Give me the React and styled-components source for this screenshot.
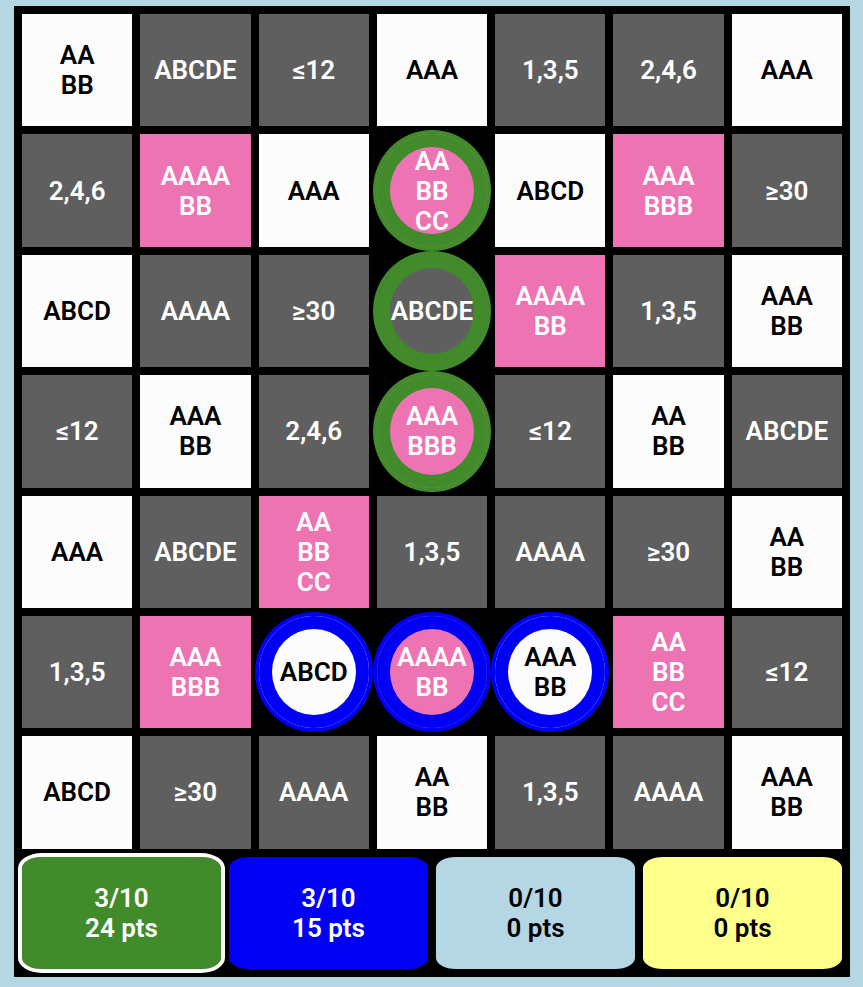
import React, { useState } from "react";
import styled, { createGlobalStyle, css } from "styled-components";

const GlobalStyle = createGlobalStyle`
  * { box-sizing: border-box; }
  body { margin: 0; background: #b5d7e3; }
`;

const tones = {
  white: { background: "#fcfcfc", color: "#000000" },
  gray: { background: "#5f5f5f", color: "#ffffff" },
  pink: { background: "#ee73b2", color: "#ffffff" },
};

const players = [
  { name: "Green", background: "#418b2b", color: "#ffffff", claimed: 3, points: 24 },
  { name: "Blue", background: "#0000f5", color: "#ffffff", claimed: 3, points: 15 },
  { name: "Light blue", background: "#b5d7e3", color: "#000000", claimed: 0, points: 0 },
  { name: "Yellow", background: "#ffff8b", color: "#000000", claimed: 0, points: 0 },
];

const labelTones = {
  "AA BB": "white",
  AAA: "white",
  ABCD: "white",
  "AAA BB": "white",
  "AAAA BB": "pink",
  "AAA BBB": "pink",
  "AA BB CC": "pink",
};

const board = [
  ["AA BB", "ABCDE", "≤12", "AAA", "1,3,5", "2,4,6", "AAA"],
  ["2,4,6", "AAAA BB", "AAA", "AA BB CC", "ABCD", "AAA BBB", "≥30"],
  ["ABCD", "AAAA", "≥30", "ABCDE", "AAAA BB", "1,3,5", "AAA BB"],
  ["≤12", "AAA BB", "2,4,6", "AAA BBB", "≤12", "AA BB", "ABCDE"],
  ["AAA", "ABCDE", "AA BB CC", "1,3,5", "AAAA", "≥30", "AA BB"],
  ["1,3,5", "AAA BBB", "ABCD", "AAAA BB", "AAA BB", "AA BB CC", "≤12"],
  ["ABCD", "≥30", "AAAA", "AA BB", "1,3,5", "AAAA", "AAA BB"],
];

const owners = { "1-3": 0, "2-3": 0, "3-3": 0, "5-2": 1, "5-3": 1, "5-4": 1 };

const Page = styled.main`
  display: flex;
  min-height: 100vh;
  padding: 6px 13px 10px 14px;
`;

const Board = styled.div`
  flex: 1;
  display: grid;
  grid-template-rows: repeat(8, minmax(96px, 1fr));
  gap: 8px;
  padding: 8px;
  background: #000000;
`;

const Row = styled.div`
  display: grid;
  grid-template-columns: repeat(${(p) => p.$count}, minmax(0, 1fr));
  gap: 8px;
`;

const Tile = styled.button`
  display: flex;
  flex-direction: column;
  align-items: center;
  justify-content: center;
  min-width: 0;
  padding: 0;
  border: 0;
  font: 600 26px/30px Roboto, sans-serif;
  white-space: nowrap;
  cursor: pointer;
`;

const Cell = styled(Tile)`
  background: ${(p) => tones[p.$tone].background};
  color: ${(p) => tones[p.$tone].color};
  ${(p) =>
    p.$ring &&
    css`
      border-radius: 50%;
      box-shadow: inset 0 0 0 13px ${p.$ring}, 0 0 0 4px ${p.$ring};
    `}
`;

const PlayerTile = styled(Tile)`
  background: ${(p) => p.$background};
  color: ${(p) => p.$color};
  border-radius: 10%;
  outline: ${(p) => (p.$active ? "4px solid #ffffff" : "none")};
`;

const Line = styled.span`
  display: block;
  flex: none;
`;

export default function App() {
  const [active, setActive] = useState(0);
  const [claims, setClaims] = useState(owners);

  const claim = (key) =>
    setClaims((current) => (key in current ? current : { ...current, [key]: active }));

  return (
    <>
      <GlobalStyle />
      <Page>
        <Board>
          {board.map((row, r) => (
            <Row key={r} $count={7}>
              {row.map((label, c) => {
                const key = `${r}-${c}`;
                return (
                  <Cell
                    key={key}
                    type="button"
                    $tone={labelTones[label] || "gray"}
                    $ring={players[claims[key]]?.background}
                    onClick={() => claim(key)}
                  >
                    {label.split(" ").map((line) => (
                      <Line key={line}>{line}</Line>
                    ))}
                  </Cell>
                );
              })}
            </Row>
          ))}
          <Row $count={4}>
            {players.map((player, i) => (
              <PlayerTile
                key={player.name}
                type="button"
                aria-pressed={active === i}
                $background={player.background}
                $color={player.color}
                $active={active === i}
                onClick={() => setActive(i)}
              >
                <Line>{player.claimed}/10</Line>
                <Line>{player.points} pts</Line>
              </PlayerTile>
            ))}
          </Row>
        </Board>
      </Page>
    </>
  );
}
